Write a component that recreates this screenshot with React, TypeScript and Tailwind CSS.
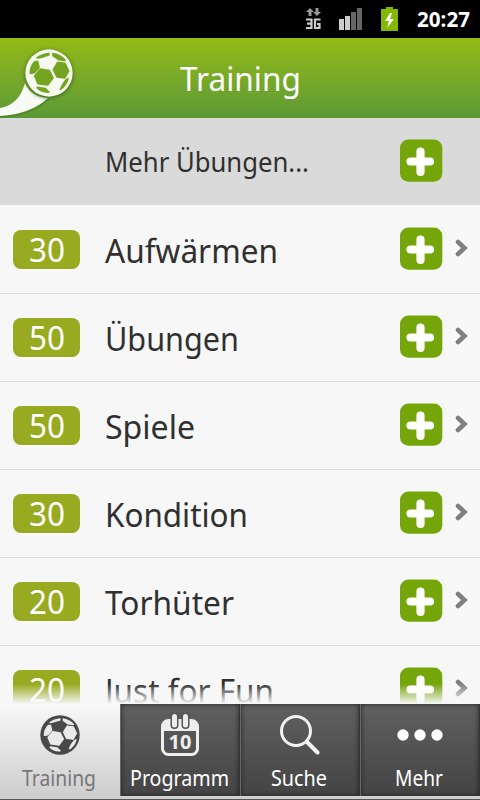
import { clsx } from 'clsx';

const rows = [
  { count: 30, label: 'Aufwärmen', width: 173 },
  { count: 50, label: 'Übungen', width: 134 },
  { count: 50, label: 'Spiele', width: 90 },
  { count: 30, label: 'Kondition', width: 143 },
  { count: 20, label: 'Torhüter', width: 129 },
  { count: 20, label: 'Just for Fun', width: 169 },
];

// Droid Sans is a bit narrower than Noto Sans, so labels are fitted to a width
function Fit({ text, width, size, height, className }: { text: string; width: number; size: number; height: number; className?: string }) {
  return (
    <svg width={width} height={height} className={clsx('block shrink-0 overflow-visible fill-current', className)}>
      <text x="0" y={height * 0.77} fontSize={size} textLength={width} lengthAdjust="spacingAndGlyphs">{text}</text>
    </svg>
  );
}

function Ball({ size, base, patch }: { size: number; base: string; patch: string }) {
  return (
    <svg width={size} height={size} viewBox="0 0 144 144" className="block">
      <circle cx="72" cy="72" r="71" fill={base} />
      <g fill={patch} stroke={patch} strokeWidth="5" strokeLinejoin="round">
        <path d="M36 27 Q50 16 72 14 L71 18 L48 25Z" />
        <path d="M84 14 Q108 19 120 34 L101 32 L84 20Z" />
        <path d="M30 38 L38 38 L42 55 L28 71 L16 73 Q16 52 30 38Z" />
        <path d="M46 60 L73 65 L84 87 L68 108 L39 104 L29 81Z" />
        <path d="M98 40 L120 43 L131 66 L119 87 L96 84 L85 62Z" />
        <path d="M37 115 L61 119 L72 129 Q52 131 37 117Z" />
        <path d="M129 89 Q124 110 106 121 L114 105 L123 93Z" />
      </g>
    </svg>
  );
}

function Plus() {
  return (
    <svg width="43" height="43" viewBox="0 0 43 43" className="block shrink-0">
      <rect y="0.500" width="42.300" height="42.300" rx="8.500" fill="#74a60a" />
      <path d="M20.500 12.500v20.500M10.500 22.500h19.500" stroke="#fff" strokeWidth="8.200" strokeLinecap="round" />
    </svg>
  );
}

function StatusBar() {
  return (
    <div className="flex h-[38px] items-center bg-black pl-[306px] text-white">
      <svg width="16" height="23" viewBox="0 0 16 23">
        <path d="M4 0L8 4H5.500V8H2.500V4H0ZM11 8L7 4H9.500V0H12.500V4H15Z" fill="#999" />
        <path d="M0 11.500H5.500V20H0M1 15.700H5.500M14.500 11.500H9V20H13.500V16H11" fill="none" stroke="#ccc" strokeWidth="2.200" />
      </svg>
      <svg width="24" height="22" viewBox="0 0 24 22" className="ml-[17px]">
        <path d="M0 11h5v11H0zM6 8h5v14H6z" fill="#ccc" />
        <path d="M12 4h5v18h-5zM18 0h5v22h-5z" fill="#666" />
      </svg>
      <svg width="18" height="24" viewBox="0 0 18 24" className="ml-[18px]">
        <path d="M5 0h7v2h5v22H0V2h5z" fill="#82b900" />
        <path d="M9 6L4 14h4l-2 7 7-9H9l2-6z" fill="#fff" />
      </svg>
      <Fit text="20:27" width={53} size={20.500} height={28} className="ml-[18px] font-bold" />
    </div>
  );
}

function Header() {
  return (
    <div className="relative flex h-20 justify-center bg-linear-to-b from-[#94ba10] to-[#5c9934] pt-[18px] pl-px text-white">
      <svg width="80" height="80" viewBox="0 0 80 80" className="absolute top-0 left-0">
        <path d="M25 45Q19 68 0 71V80Q33 78 50 61Q33 61 25 45Z" fill="#396d1b" opacity=".35" />
        <path d="M25 45Q19 67 0 70V78Q31 76 48 60Q31 59 25 45Z" fill="#f8faf5" />
      </svg>
      <div className="absolute top-[11px] left-[25px] drop-shadow-[0_1px_2px_#39611c]">
        <Ball size={48} base="#f5f9ef" patch="#73a520" />
      </div>
      <Fit text="Training" width={121} size={33.500} height={46} />
    </div>
  );
}

function Tab({ label, width, active, children }: { label: string; width: number; active?: boolean; children: React.ReactNode }) {
  return (
    <div
      className={clsx(
        'flex h-full w-[120px] shrink-0 flex-col items-center pr-0.5',
        active
          ? 'bg-linear-to-b from-[#f8f8f8] to-[#cecece] text-[#777]'
          : 'border-r border-l border-r-[#343434] border-l-[#686868] bg-linear-to-b from-[#606060] to-[#454445] text-white shadow-[inset_0_0_5px_#222]',
      )}
    >
      <div className="flex h-[62px] items-center pl-px">{children}</div>
      <Fit text={label} width={width} size={22.500} height={26} />
    </div>
  );
}

export default function App() {
  return (
    <div className="relative h-[800px] w-[480px] overflow-hidden bg-[#f7f7f7] font-['Noto_Sans',sans-serif] text-[#303030]">
      <StatusBar />
      <Header />
      <div className="flex h-[87px] items-center bg-[#dadada] pl-[105px]">
        <Fit text="Mehr Übungen..." width={204} size={28} height={39} />
        <div className="-mt-0.5 ml-[91px]"><Plus /></div>
      </div>
      <div className="pt-px">
        {rows.map((row) => (
          <div key={row.label} className="flex h-[88px] items-center border-b border-[#dcdcdc] pl-[13px]">
            <div className="flex h-[39px] w-[67px] items-center justify-center rounded-lg bg-[#98aa20] text-white">
              <Fit text={String(row.count)} width={36} size={33.500} height={47} />
            </div>
            <div className="ml-[25px] w-[295px]">
              <Fit text={row.label} width={row.width} size={33.500} height={48} />
            </div>
            <div className="-mt-0.5"><Plus /></div>
            <svg width="14" height="18" viewBox="0 0 14 18" className="-mt-1 ml-3">
              <path d="M3 3l6.500 6-6.500 6" fill="none" stroke="#808080" strokeWidth="4.500" strokeLinecap="round" />
            </svg>
          </div>
        ))}
      </div>
      <div className="absolute inset-x-0 bottom-0">
        <div className="h-5 bg-linear-to-b from-[#f7f7f7]/0 to-[#f7f7f7]" />
        <div className="flex h-[92px]">
          <Tab label="Training" width={74} active>
            <Ball size={40} base="#484848" patch="#e9e9e9" />
          </Tab>
          <Tab label="Programm" width={99}>
            <svg width="38" height="44" viewBox="0 0 38 44">
              <rect x="1.500" y="7.500" width="35" height="34" rx="6" fill="none" stroke="#eee" strokeWidth="3" />
              <path d="M1 18V13q0-6 6-6h24q6 0 6 6v5z" fill="#eee" />
              <path d="M13.500 3.500v8.500M24.500 3.500v8.500" stroke="#555" strokeWidth="8" strokeLinecap="round" />
              <path d="M13.500 3.500v8.500M24.500 3.500v8.500" stroke="#eee" strokeWidth="5" strokeLinecap="round" />
              <text x="19" y="36" textAnchor="middle" fontSize="20" fontWeight="700" fill="#eee">10</text>
            </svg>
          </Tab>
          <Tab label="Suche" width={56}>
            <svg width="40" height="40" viewBox="0 0 40 40">
              <circle cx="16" cy="16" r="14.500" fill="none" stroke="#f3f3f3" strokeWidth="3" />
              <path d="M27 27l10.500 10.500" stroke="#f3f3f3" strokeWidth="4" strokeLinecap="round" />
            </svg>
          </Tab>
          <Tab label="Mehr" width={48}>
            <svg width="46" height="12" viewBox="0 0 46 12" fill="#fff">
              <circle cx="6" cy="6" r="5.700" />
              <circle cx="23" cy="6" r="5.700" />
              <circle cx="40" cy="6" r="5.700" />
            </svg>
          </Tab>
        </div>
        <div className="h-[3px] bg-[#d0d0d0]" />
        <div className="h-px bg-[#555]" />
      </div>
    </div>
  );
}
